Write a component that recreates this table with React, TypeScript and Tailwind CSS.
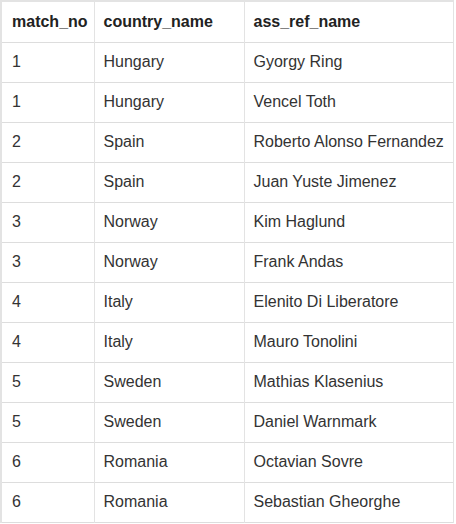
const rows: [string, string, string][] = [
  ["1", "Hungary", "Gyorgy Ring"],
  ["1", "Hungary", "Vencel Toth"],
  ["2", "Spain", "Roberto Alonso Fernandez"],
  ["2", "Spain", "Juan Yuste Jimenez"],
  ["3", "Norway", "Kim Haglund"],
  ["3", "Norway", "Frank Andas"],
  ["4", "Italy", "Elenito Di Liberatore"],
  ["4", "Italy", "Mauro Tonolini"],
  ["5", "Sweden", "Mathias Klasenius"],
  ["5", "Sweden", "Daniel Warnmark"],
  ["6", "Romania", "Octavian Sovre"],
  ["6", "Romania", "Sebastian Gheorghe"],
];

export default function App() {
  return (
    <div className="w-[456px] h-[524px] overflow-hidden bg-white font-['Liberation_Sans',Arial,sans-serif]">
      <table className="w-[454px] border-collapse border-l-2 border-t-2 border-[#e3e3e3] text-[16px]">
        <thead>
          <tr className="h-[41px] border-b border-[#dddddd] text-[#222]">
            <th className="w-[93px] pl-[10px] text-left font-bold border-r border-[#e3e3e3]">match_no</th>
            <th className="w-[150px] pl-[9px] text-left font-bold border-r border-[#e3e3e3]">country_name</th>
            <th className="pl-[9px] text-left font-bold border-r border-[#e3e3e3]">ass_ref_name</th>
          </tr>
        </thead>
        <tbody className="text-[#333]">
          {rows.map((r, i) => (
            <tr key={i} className="h-[40px] border-b border-[#dddddd]">
              <td className="pl-[10px] border-r border-[#e3e3e3]">{r[0]}</td>
              <td className="pl-[9px] border-r border-[#e3e3e3]">{r[1]}</td>
              <td className="pl-[9px] border-r border-[#e3e3e3]">{r[2]}</td>
            </tr>
          ))}
        </tbody>
      </table>
    </div>
  );
}
